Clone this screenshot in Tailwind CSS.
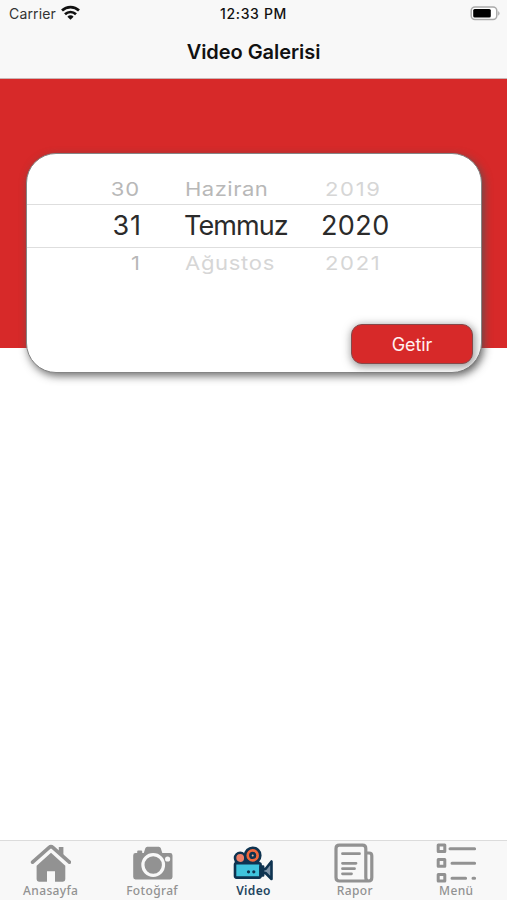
<!DOCTYPE html>
<html lang="tr">
<head>
    <meta charset="UTF-8">
    <meta name="viewport" content="width=device-width, initial-scale=1.0">
    <title>Video Galerisi</title>
    <script src="https://cdn.jsdelivr.net/npm/@tailwindcss/browser@4"></script>
</head>
<body class="bg-white font-['Inter',sans-serif]">
    <div class="flex flex-col h-[900px] w-[507px] overflow-hidden">
        <header class="h-[79px] shrink-0 bg-[#f8f8f8] border-b border-[#c9b5b5]">
            <div class="grid grid-cols-3 items-center h-[27px] px-[9px] text-[14px] text-[#333]">
                <div class="flex items-center gap-[5px]">
                    <span class="tracking-[0.15px]">Carrier</span>
                    <svg class="w-[19px] h-[15px] -mt-[2px]" viewBox="0 0 19 15" fill="none" stroke="#111" stroke-width="2.7">
                        <path d="M1 5.6a12.3 12.3 0 0 1 17 0"/>
                        <path d="M4 9.2a8 8 0 0 1 11 0"/>
                        <path d="M6.4 11.7a4.2 4.2 0 0 1 6.2 0L9.5 14.8z" fill="#111" stroke="none"/>
                    </svg>
                </div>
                <span class="text-center font-medium tracking-[0.65px] text-[#111] whitespace-nowrap">12:33 PM</span>
                <svg class="justify-self-end w-[31px] h-[15px] -mr-[3px]" viewBox="0 0 31 15">
                    <rect x="1.2" y="1" width="25.6" height="12.6" rx="3.8" fill="#fff" stroke="#aaa" stroke-width="1.5"/>
                    <rect x="3.2" y="3" width="17.6" height="8.6" rx="1.5" fill="#000"/>
                    <path d="M28.2 4.9q2.8 2.4 0 4.8z" fill="#aaa"/>
                </svg>
            </div>
            <h1 class="text-center text-[20px] leading-[51px] font-semibold tracking-[-0.05px] text-[#111]">Video Galerisi</h1>
        </header>

        <main class="grow">
            <section class="h-[269px] bg-[#d72929] pt-[74px] pl-[26px]">
                <div class="flex flex-col w-[456px] h-[220px] bg-white rounded-[30px] border border-[#858585] shadow-[2px_3px_9px_0px_rgba(85,85,85,0.85)]">
                    <!-- date picker -->
                    <div class="grid grid-cols-[115px_110px_90px] gap-x-[43px] h-[50px] items-end text-[22px] leading-[30px] text-[#b8b8b8]">
                        <span class="text-right pr-[2px] tracking-[0.9px] scale-y-[0.87]">30</span>
                        <span class="scale-y-[0.87] tracking-[0.5px]">Haziran</span>
                        <span class="-ml-[13px] scale-y-[0.87] tracking-[1.7px] text-[#d6d6d6]">2019</span>
                    </div>
                    <div class="grid grid-cols-[115px_110px_90px] gap-x-[43px] h-[44px] items-center border-y border-[#dedede] text-[27px] leading-[40px] text-[#2b2b2b]">
                        <span class="text-right tracking-[0.9px]">31</span>
                        <span class="-ml-[1px] tracking-[-0.9px]">Temmuz</span>
                        <span class="-ml-[17px] tracking-[0.4px]">2020</span>
                    </div>
                    <div class="grid grid-cols-[115px_110px_90px] gap-x-[43px] h-[30px] text-[22px] leading-[30px] text-[#d6d6d6]">
                        <span class="text-right pr-[2px] scale-y-[0.87] text-[#b8b8b8]">1</span>
                        <span class="scale-y-[0.87] tracking-[0.7px]">Ağustos</span>
                        <span class="-ml-[13px] scale-y-[0.87] tracking-[1.7px]">2021</span>
                    </div>
                    <button class="self-end mt-auto mb-[8px] mr-[8px] w-[122px] h-[40px] rounded-[11px] bg-[#d72929] border border-[#85494a] text-[18px] tracking-[-0.1px] text-[#fff0f0] shadow-[1px_2px_8px_1px_rgba(80,80,80,0.6)]">Getir</button>
                </div>
            </section>
        </main>

        <nav class="grid grid-cols-5 h-[60px] shrink-0 pt-[2px] bg-[#f8f8f8] border-t border-[#dcdcdc] text-[12px] leading-[14px] tracking-[0.35px] text-[#929292] font-medium font-['Noto_Sans',sans-serif]">
            <a class="flex flex-col items-center">
                <svg class="w-[41px] h-[41px]" viewBox="0 0 41 41" fill="#929292">
                    <path d="M28.8 4h4.6v10L28.8 10z"/>
                    <path d="M2.6 19.2 19 4.6q2-1.8 4 0l16.4 14.6" fill="none" stroke="#929292" stroke-width="3.6" stroke-linecap="round"/>
                    <path d="M21 9.8 35.3 22.7v13.6q0 2.4-2.4 2.4H25V28.2h-8v10.5H9q-2.4 0-2.4-2.4V22.7z"/>
                </svg>
                <span>Anasayfa</span>
            </a>
            <a class="flex flex-col items-center">
                <svg class="w-[41px] h-[41px]" viewBox="0 0 41 41" fill="#929292">
                    <path d="M3.5 10h1.7V8.6q0-1 1-1h3q1 0 1 1V10h1.6l1.5-4.8q.5-1.5 2-1.5h11.5q1.5 0 2 1.5L30.3 10h7.8q2.4 0 2.4 2.4V34q0 2.4-2.4 2.4H3.5q-2.3 0-2.3-2.4V12.4q0-2.4 2.3-2.4z"/>
                    <circle cx="21.2" cy="22" r="10.3" stroke="#f8f8f8" stroke-width="3.2"/>
                    <circle cx="35.6" cy="16" r="2.6" fill="#f8f8f8"/>
                </svg>
                <span>Fotoğraf</span>
            </a>
            <a class="flex flex-col items-center text-[#1f4560] font-semibold">
                <svg class="w-[41px] h-[41px]" viewBox="0 0 41 41" stroke="#0e3350" stroke-width="2.6" stroke-linejoin="round">
                    <path d="M3 18h22v5H3z" fill="#0e3350"/>
                    <circle cx="7.2" cy="15" r="5.2" fill="#ee7f68"/>
                    <circle cx="19.7" cy="12.4" r="7.6" fill="#f0673c"/>
                    <circle cx="19.7" cy="12.4" r="2.3" fill="#f9b08c"/>
                    <path d="M29 26h3.5l6-7.5v17.5l-6-6H29z" fill="#7d93a8"/>
                    <rect x="2" y="20.2" width="25.6" height="14.4" rx="1.5" fill="#3fc4dd"/>
                    <path d="M27.5 23.5h2.6v9h-2.6z" fill="#0e3350"/>
                    <circle cx="15.5" cy="28.8" r=".8" fill="#0e3350" stroke-width="1.6"/>
                    <circle cx="20.8" cy="28.8" r=".8" fill="#0e3350" stroke-width="1.6"/>
                </svg>
                <span>Video</span>
            </a>
            <a class="flex flex-col items-center">
                <svg class="w-[41px] h-[41px]" viewBox="0 0 41 41" fill="none" stroke="#929292" stroke-width="3.2" stroke-linecap="round">
                    <path d="M32.5 38H5.5Q2 38 2 34.5v-29Q2 2.2 5.3 2.2h23.2q3.3 0 3.3 3.3v29q0 3.5 3 3.5t3-3.5V12.8q0-2.8-2.8-2.8H32"/>
                    <path d="M8.5 10.7h17M8.5 20.3h13.5M8.5 25.7h12M8.5 30.8h9" stroke-width="2.8"/>
                </svg>
                <span>Rapor</span>
            </a>
            <a class="flex flex-col items-center">
                <svg class="w-[41px] h-[41px]" viewBox="0 0 41 41" fill="none" stroke="#929292" stroke-width="3" stroke-linejoin="round" stroke-linecap="round">
                    <rect x="2.2" y="2" width="6.6" height="6.6"/>
                    <rect x="2.2" y="16.6" width="6.6" height="6.6"/>
                    <rect x="2.2" y="31.4" width="6.6" height="6.6"/>
                    <path d="M14 5.7h24.6M16 20.3h22.6M16 35.2h13.6M37 35.2h1.6"/>
                </svg>
                <span>Menü</span>
            </a>
        </nav>
    </div>
</body>
</html>
